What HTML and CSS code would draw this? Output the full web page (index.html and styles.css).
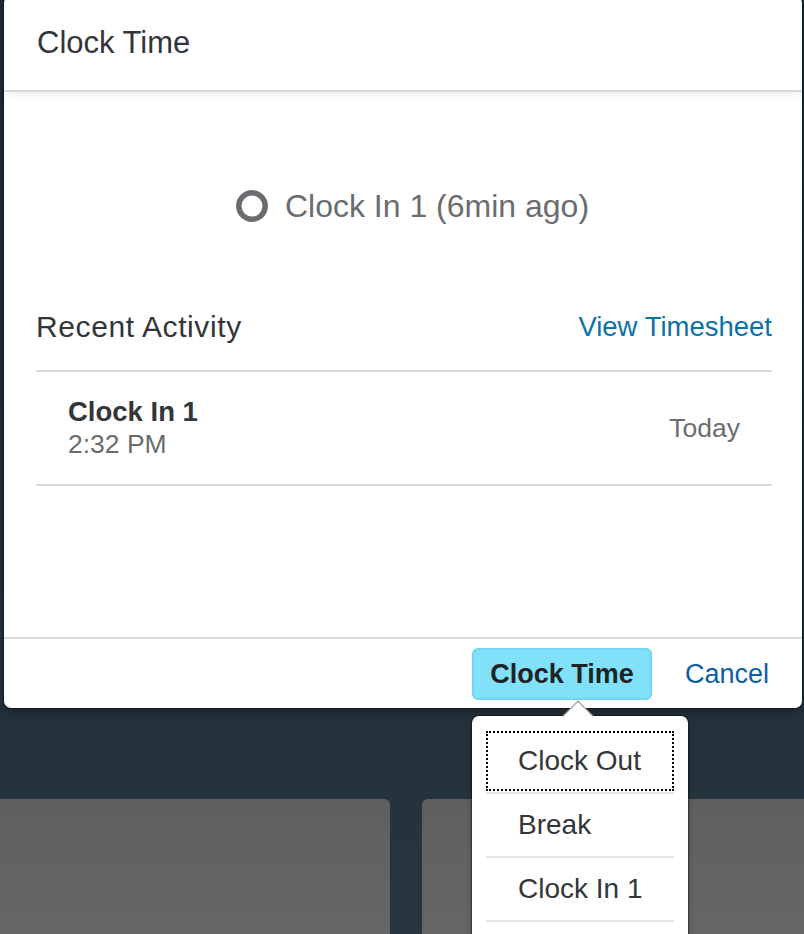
FILE: index.html
```html
<!DOCTYPE html>
<html>
<head>
<meta charset="utf-8">
<link rel="stylesheet" href="styles.css">
</head>
<body>
  <div class="tiles">
    <div class="tile tile-left"></div>
    <div class="tile tile-right"></div>
  </div>

  <div class="dialog">
    <header class="dialog-header">
      <h1 class="dialog-title">Clock Time</h1>
    </header>
    <main class="dialog-content">
      <div class="status">
        <svg class="status-icon" width="32" height="32" viewBox="0 0 32 32">
          <circle cx="16" cy="16" r="13.2" fill="none" stroke="#6a6d70" stroke-width="5.5"/>
        </svg>
        <span class="status-text">Clock In 1 (6min ago)</span>
      </div>
      <div class="activity-head">
        <span class="activity-title">Recent Activity</span>
        <a class="link">View Timesheet</a>
      </div>
      <div class="activity-item">
        <div class="activity-main">
          <div class="activity-name">Clock In 1</div>
          <div class="activity-time">2:32 PM</div>
        </div>
        <div class="activity-date">Today</div>
      </div>
    </main>
    <footer class="dialog-footer">
      <button class="btn btn-primary">Clock Time</button>
      <button class="btn btn-ghost">Cancel</button>
    </footer>
  </div>

  <div class="popover">
    <div class="popover-arrow"></div>
    <ul class="menu">
      <li class="menu-item focused">Clock Out</li>
      <li class="menu-item">Break</li>
      <li class="menu-item">Clock In 1</li>
    </ul>
  </div>
</body>
</html>
```

FILE: styles.css
```css
* { box-sizing: border-box; }

html, body {
  margin: 0;
  padding: 0;
}

body {
  width: 804px;
  height: 934px;
  overflow: hidden;
  position: relative;
  background: linear-gradient(180deg, #1e2a33 0%, #23313b 70%, #26353f 100%);
  font-family: "Liberation Sans", Arial, sans-serif;
  color: #32363a;
}

.tiles {
  display: flex;
  gap: 32px;
  padding-top: 799px;
  margin-left: -12px;
}

.tile {
  height: 135px;
  width: 402px;
  border-radius: 6px 6px 0 0;
  background: linear-gradient(180deg, #5f5f5f 0%, #666666 100%);
  flex: none;
}

.dialog {
  position: absolute;
  left: 4px;
  top: -4px;
  width: 798px;
  height: 712px;
  background: #ffffff;
  border-radius: 7px;
  display: flex;
  flex-direction: column;
  box-shadow: 0 0 0 1px rgba(0, 0, 0, 0.35), 0 4px 10px rgba(0, 0, 0, 0.3);
  overflow: hidden;
}

.dialog-header {
  height: 96px;
  flex: none;
  display: flex;
  align-items: center;
  padding-left: 33px;
  border-bottom: 2px solid #d9d9d9;
  box-shadow: 0 3px 8px rgba(0, 0, 0, 0.07);
  position: relative;
  z-index: 1;
}

.dialog-title {
  margin: 0;
  font-size: 31px;
  font-weight: normal;
  line-height: 36px;
  color: #32363a;
}

.dialog-content {
  flex: 1;
  padding: 94px 30px 0 32px;
  background: #fff;
}

.status {
  display: flex;
  align-items: center;
  justify-content: center;
  gap: 17px;
  height: 40px;
  padding-left: 17px;
}

.status-icon { flex: none; }

.status-text {
  font-size: 32px;
  color: #6a6d70;
  line-height: 40px;
}

.activity-head {
  display: flex;
  justify-content: space-between;
  align-items: center;
  margin-top: 81px;
  height: 40px;
  padding-bottom: 23px;
  border-bottom: 2px solid #d9d9d9;
  box-sizing: content-box;
}

.activity-title {
  font-size: 30px;
  letter-spacing: 0.6px;
  line-height: 40px;
  color: #32363a;
}

.link {
  font-size: 27.5px;
  line-height: 40px;
  color: #0a72a8;
}

.activity-item {
  display: flex;
  justify-content: space-between;
  align-items: center;
  padding: 24px 32px 24px 32px;
  border-bottom: 2px solid #d9d9d9;
}

.activity-name {
  font-size: 27.5px;
  font-weight: bold;
  line-height: 32px;
  color: #32363a;
}

.activity-time {
  font-size: 26.5px;
  line-height: 32px;
  color: #6a6d70;
}

.activity-date {
  font-size: 26.5px;
  color: #6a6d70;
}

.dialog-footer {
  flex: none;
  height: 71px;
  border-top: 2px solid #d9d9d9;
  display: flex;
  justify-content: flex-end;
  align-items: flex-start;
  padding: 9px 17px 0 0;
  gap: 17px;
}

.btn {
  font-family: "Liberation Sans", Arial, sans-serif;
  height: 52px;
  border-radius: 6px;
  font-size: 27px;
  cursor: pointer;
}

.btn-primary {
  width: 180px;
  background: #80e1f8;
  border: 2px solid #6fd5f1;
  font-weight: bold;
  color: #1f2225;
  padding: 0;
}

.btn-ghost {
  background: transparent;
  border: none;
  color: #0b5ea5;
  padding: 0 16px;
}

.popover {
  position: absolute;
  left: 472px;
  top: 716px;
  width: 216px;
  height: 240px;
  background: #ffffff;
  border-radius: 7px;
  box-shadow: 0 0 0 1px rgba(0, 0, 0, 0.3), 0 2px 6px rgba(0, 0, 0, 0.35);
  padding: 14px 14px 0 14px;
}

.popover-arrow {
  position: absolute;
  left: 95px;
  top: -11px;
  width: 22px;
  height: 22px;
  background: #ffffff;
  transform: rotate(45deg);
  border-top: 1px solid #8a8a8a;
  border-left: 1px solid #8a8a8a;
}

.menu {
  list-style: none;
  margin: 0;
  padding: 0;
  position: relative;
}

.menu-item {
  position: relative;
  height: 64px;
  line-height: 62px;
  padding-left: 32px;
  font-size: 28px;
  color: #32363a;
  border-bottom: 2px solid #e5e5e5;
}

.menu-item.focused::before {
  content: "";
  position: absolute;
  left: 0;
  right: 0;
  top: 1px;
  bottom: 1px;
  border: 2px dotted #000;
}
```
